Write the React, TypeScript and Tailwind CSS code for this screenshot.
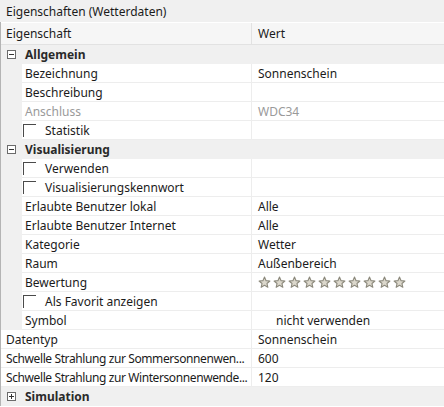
import React from 'react';

type Row =
  | { kind: 'cat'; label: string; open: boolean }
  | { kind: 'prop'; label: string; value?: string; indent?: boolean; check?: boolean; muted?: boolean; stars?: boolean; valueIndent?: boolean; tight?: boolean };

const rows: Row[] = [
  { kind: 'cat', label: 'Allgemein', open: true },
  { kind: 'prop', label: 'Bezeichnung', value: 'Sonnenschein', indent: true },
  { kind: 'prop', label: 'Beschreibung', indent: true },
  { kind: 'prop', label: 'Anschluss', value: 'WDC34', indent: true, muted: true },
  { kind: 'prop', label: 'Statistik', indent: true, check: true },
  { kind: 'cat', label: 'Visualisierung', open: true },
  { kind: 'prop', label: 'Verwenden', indent: true, check: true },
  { kind: 'prop', label: 'Visualisierungskennwort', indent: true, check: true },
  { kind: 'prop', label: 'Erlaubte Benutzer lokal', value: 'Alle', indent: true },
  { kind: 'prop', label: 'Erlaubte Benutzer Internet', value: 'Alle', indent: true },
  { kind: 'prop', label: 'Kategorie', value: 'Wetter', indent: true },
  { kind: 'prop', label: 'Raum', value: 'Außenbereich', indent: true },
  { kind: 'prop', label: 'Bewertung', indent: true, stars: true },
  { kind: 'prop', label: 'Als Favorit anzeigen', indent: true, check: true },
  { kind: 'prop', label: 'Symbol', value: 'nicht verwenden', indent: true, valueIndent: true },
  { kind: 'prop', label: 'Datentyp', value: 'Sonnenschein' },
  { kind: 'prop', label: 'Schwelle Strahlung zur Sommersonnenwen...', value: '600', tight: true },
  { kind: 'prop', label: 'Schwelle Strahlung zur Wintersonnenwende...', value: '120', tight: true },
  { kind: 'cat', label: 'Simulation', open: false },
];

function Toggle({ open }: { open: boolean }) {
  return (
    <svg width="9" height="9" viewBox="0 0 9 9" className="shrink-0">
      <rect x="0.5" y="0.5" width="8" height="8" fill="white" stroke="#6b6b6b" />
      <line x1="2" y1="4.5" x2="7" y2="4.5" stroke="#333" />
      {!open && <line x1="4.5" y1="2" x2="4.5" y2="7" stroke="#333" />}
    </svg>
  );
}

function Star() {
  return (
    <svg width="13" height="13" viewBox="0 0 24 24" className="shrink-0">
      <path
        d="M12 2l2.9 6.6 7.1.6-5.4 4.7 1.6 7-6.2-3.7-6.2 3.7 1.6-7L2 9.2l7.1-.6z"
        fill="#dcd8cc"
        stroke="#8c897c"
        strokeWidth="2"
        strokeLinejoin="round"
      />
    </svg>
  );
}

export default function App() {
  return (
    <div
      className="w-[444px] h-[407px] bg-white text-[12px] text-[#1b1b1b] overflow-hidden"
      style={{ fontFamily: '"Noto Sans", "Open Sans", sans-serif' }}
    >
      <div className="h-[22px] bg-[#f0f0f0] pl-[6px] pt-[2px] flex items-center">Eigenschaften (Wetterdaten)</div>
      <div className="border-l border-[#b4b4b4]">
        <div className="h-[23px] bg-[#f6f6f6] border-t border-white border-b border-b-[#e2e2e2] flex">
          <div className="w-[251px] pl-[5px] pt-[1px] flex items-center border-r border-[#e2e2e2]">Eigenschaft</div>
          <div className="pl-[6px] pt-[1px] flex items-center">Wert</div>
        </div>
        {rows.map((r, i) =>
          r.kind === 'cat' ? (
            <div key={i} className="h-[19px] bg-[#f0f0f0] flex items-center pl-[6px] gap-[9px] font-bold text-[#2a2a2a]">
              <Toggle open={r.open} />
              <span className="pt-[1px]">{r.label}</span>
            </div>
          ) : (
            <div key={i} className="h-[19px] flex">
              {r.indent && <div className="w-[21px] bg-[#f0f0f0] shrink-0" />}
              <div
                className={
                  (r.indent ? 'w-[230px] pl-[3px]' : 'w-[251px] pl-[5px]') +
                  ' border-r border-b border-[#ededed] flex items-center gap-[8px] whitespace-nowrap overflow-hidden ' +
                  (r.muted ? 'text-[#9a9a9a]' : '')
                }
              >
                {r.check && <div className="w-[13px] h-[13px] border-t border-l border-[#4a4a4a] shrink-0 -ml-[2px] mr-[1px]" />}
                <span className={'pt-[1px] ' + (r.tight ? 'tracking-[-0.4px]' : '')}>{r.label}</span>
              </div>
              <div
                className={
                  'flex-1 border-b border-[#ededed] flex items-center ' +
                  (r.valueIndent ? 'pl-[24px] ' : 'pl-[6px] ') +
                  (r.muted ? 'text-[#9a9a9a]' : '')
                }
              >
                {r.stars ? (
                  <div className="flex gap-[2px] pt-[1px]">
                    {Array.from({ length: 10 }).map((_, k) => (
                      <Star key={k} />
                    ))}
                  </div>
                ) : (
                  <span className="pt-[1px]">{r.value}</span>
                )}
              </div>
            </div>
          )
        )}
      </div>
    </div>
  );
}
